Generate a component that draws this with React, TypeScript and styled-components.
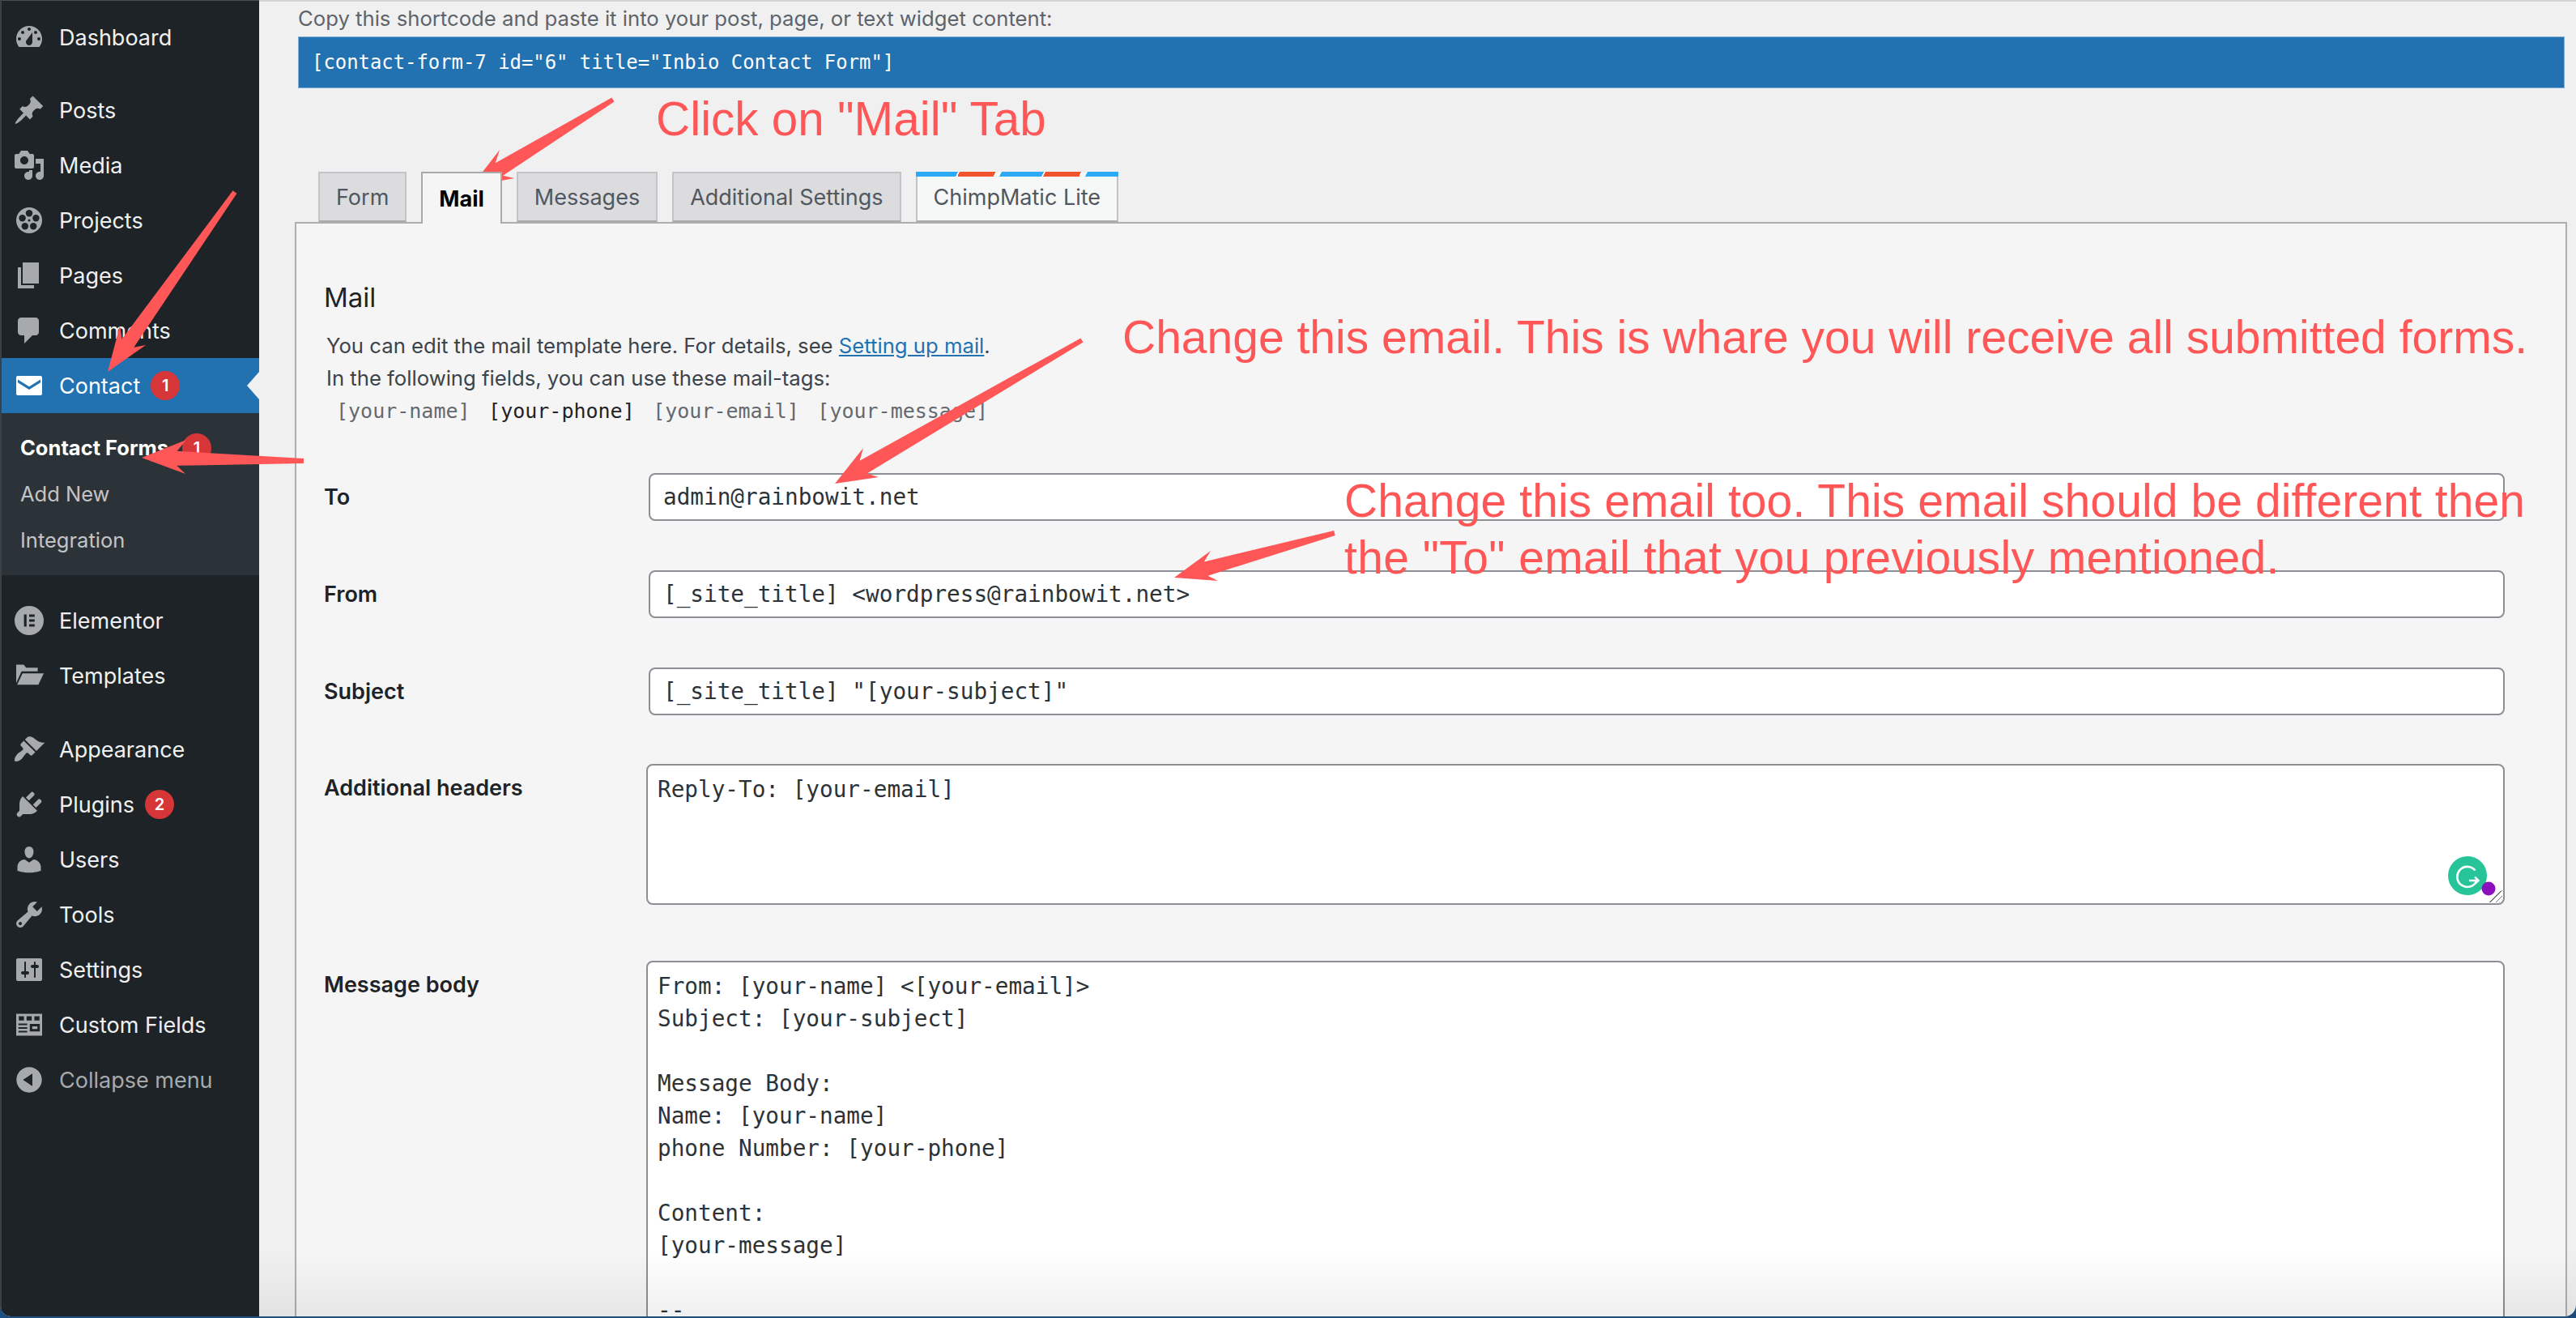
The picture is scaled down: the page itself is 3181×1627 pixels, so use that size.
import React from 'react';
import styled, { createGlobalStyle } from 'styled-components';

const UI_FONT = '"Inter", "Liberation Sans", sans-serif';
const MONO_FONT = '"DejaVu Sans Mono", "Liberation Mono", monospace';
const NOTE_COLOR = '#ff5757';

const GlobalStyle = createGlobalStyle`
    html, body {
        margin: 0;
        padding: 0;
        background: #1b4f82;
    }
    * {
        box-sizing: border-box;
    }
`;

// Page frame
const Desktop = styled.div`
    position: relative;
    width: 3181px;
    height: 1627px;
    overflow: hidden;
    background: #1b4f82;
    font-family: ${UI_FONT};
`;

const Frame = styled.div`
    display: flex;
    height: 1625px;
    overflow: hidden;
    border-radius: 0 0 14px 14px;
    background: #f0f0f1;
`;

// Sidebar
const Sidebar = styled.nav`
    flex: 0 0 320px;
    padding-top: 11px;
    background: #1d2327;
    border-left: 2px solid #3b4045;
    border-top: 1px solid #4a4e52;
`;

const MenuGroup = styled.div`
    margin-bottom: 22px;

    &:last-child {
        margin-top: 23px;
    }
`;

const MenuItem = styled.div<{ $current?: boolean; $muted?: boolean }>`
    position: relative;
    display: flex;
    align-items: center;
    gap: 17px;
    height: 68px;
    padding-left: 14px;
    font-size: 27px;
    color: ${(p) => (p.$current ? '#fff' : p.$muted ? '#a7aaad' : '#f0f0f1')};
    background: ${(p) => (p.$current ? '#2271b1' : 'transparent')};

    ${(p) =>
        p.$current &&
        `&::after {
            content: '';
            position: absolute;
            right: 0;
            top: 50%;
            margin-top: -17px;
            border: 17px solid transparent;
            border-left-width: 0;
            border-right: 15px solid #f0f0f1;
        }`}
`;

const Glyph = styled.svg<{ $current?: boolean }>`
    flex: 0 0 40px;
    width: 40px;
    height: 40px;
    fill: ${(p) => (p.$current ? '#fff' : '#a7aaad')};
`;

const Badge = styled.span<{ $gap?: number }>`
    display: inline-flex;
    align-items: center;
    justify-content: center;
    width: 36px;
    height: 36px;
    margin-left: ${(p) => p.$gap ?? -4}px;
    border-radius: 50%;
    background: #d63638;
    color: #fff;
    font-size: 20px;
    font-weight: 600;
`;

const SubMenu = styled.div`
    padding: 14px 0 15px;
    background: #2c3338;
`;

const SubItem = styled.div<{ $current?: boolean }>`
    display: flex;
    align-items: center;
    height: 57px;
    padding-left: 23px;
    font-size: 25.5px;
    font-weight: ${(p) => (p.$current ? 700 : 400)};
    color: ${(p) => (p.$current ? '#fff' : '#c3c4c7')};
`;

// Main column
const Main = styled.main`
    flex: 1;
    min-width: 0;
    padding: 0 14px 0 48px;
    border-top: 2px solid #d4d4d4;
    color: #3c434a;
`;

const ShortcodeHint = styled.p`
    margin: 0;
    height: 43px;
    line-height: 42px;
    font-size: 25.7px;
    color: #5f646a;
`;

const ShortcodeBar = styled.div`
    display: flex;
    align-items: center;
    height: 64px;
    padding-left: 16px;
    background: #2271b1;
    border: 1px solid #7fafd6;
    color: #fff;
    font-family: ${MONO_FONT};
    font-size: 23.9px;
`;

const TabRow = styled.div`
    display: flex;
    gap: 18px;
    height: 165px;
    margin: 0 -3px 0 25px;
    padding-top: 103px;
`;

const Tab = styled.div<{ $active?: boolean; $airmail?: boolean }>`
    position: relative;
    display: flex;
    align-items: center;
    justify-content: center;
    height: ${(p) => (p.$active ? 64 : 62)}px;
    padding: 0 20px;
    border: 2px solid ${(p) => (p.$active ? '#a9a9a9' : '#c3c4c7')};
    border-bottom: ${(p) => (p.$active ? 'none' : '2px solid #aaa')};
    background: ${(p) => (p.$active ? '#f5f5f5' : p.$airmail ? '#f6f7f7' : '#dcdcde')};
    color: ${(p) => (p.$active ? '#000' : '#50575e')};
    font-size: 27px;
    font-weight: ${(p) => (p.$active ? 700 : 400)};
    z-index: ${(p) => (p.$active ? 2 : 0)};

    ${(p) =>
        p.$airmail &&
        `&::before {
            content: '';
            position: absolute;
            top: -2px;
            left: -2px;
            right: -2px;
            height: 6px;
            background: repeating-linear-gradient(115deg, #2ea9f5 0 47px, #f6f7f7 47px 49px, #f0532e 49px 89px, #f6f7f7 89px 96px);
        }`}
`;

const Panel = styled.section`
    position: relative;
    height: 1400px;
    margin: 0 -3px 0 -4px;
    padding: 66px 75px 0 34px;
    background: #f5f5f5;
    border: 2px solid #aeaeae;
`;

const PanelTitle = styled.h2`
    margin: 0 0 15px;
    height: 50px;
    line-height: 50px;
    font-size: 33px;
    font-weight: 400;
    color: #1d2327;
`;

const Description = styled.p`
    margin: 0;
    height: 40px;
    line-height: 40px;
    padding-left: 3px;
    font-size: 25.7px;
    color: #3c434a;
`;

const HelpLink = styled.a`
    color: #2271b1;
    text-decoration: underline;
`;

const TagList = styled.div`
    display: flex;
    gap: 22.5px;
    margin-bottom: 57px;
    padding-left: 15px;
    height: 40px;
    align-items: center;
    font-family: ${MONO_FONT};
    font-size: 25px;
`;

const MailTag = styled.span<{ $used?: boolean }>`
    color: ${(p) => (p.$used ? '#1d2327' : '#646970')};
`;

const FieldRow = styled.div<{ $gap: number; $top?: boolean }>`
    display: grid;
    grid-template-columns: 398px 1fr;
    align-items: ${(p) => (p.$top ? 'start' : 'center')};
    margin-bottom: ${(p) => p.$gap}px;
`;

const FieldLabel = styled.label<{ $top?: boolean }>`
    padding-top: ${(p) => (p.$top ? 10 : 0)}px;
    line-height: 40px;
    font-size: 27px;
    font-weight: 600;
    color: #1d2327;
`;

const TextField = styled.div`
    height: 59px;
    margin-left: 3px;
    padding: 0 16px;
    line-height: 55px;
    background: #fff;
    border: 2px solid #8c8f94;
    border-radius: 8px;
    font-family: ${MONO_FONT};
    font-size: 27.7px;
    color: #2c3338;
`;

const TextArea = styled.div<{ $height: number }>`
    position: relative;
    height: ${(p) => p.$height}px;
    padding: 10px 12px;
    line-height: 40px;
    white-space: pre-line;
    background: #fff;
    border: 2px solid #8c8f94;
    border-radius: 8px;
    font-family: ${MONO_FONT};
    font-size: 27.7px;
    color: #2c3338;
`;

const ResizeGrip = styled.span`
    position: absolute;
    right: 1px;
    bottom: 1px;
    width: 16px;
    height: 16px;
    background: linear-gradient(135deg, transparent 50%, #777 50%, #777 56%, transparent 56%, transparent 72%, #777 72%, #777 78%, transparent 78%);
`;

const GrammarlyMark = styled.svg`
    position: absolute;
    right: 2px;
    bottom: -8px;
    width: 66px;
    height: 66px;
`;

// Annotations drawn over the screenshot
const ArrowLayer = styled.svg`
    position: absolute;
    inset: 0;
    width: 3181px;
    height: 1627px;
    pointer-events: none;
`;

const Note = styled.div<{ $x: number; $y: number; $size?: number; $spacing?: number }>`
    position: absolute;
    left: ${(p) => p.$x}px;
    top: ${(p) => p.$y}px;
    line-height: 70px;
    white-space: pre;
    font-family: "Liberation Sans", Arial, sans-serif;
    font-size: ${(p) => p.$size ?? 57}px;
    letter-spacing: ${(p) => p.$spacing ?? 0}px;
    color: ${NOTE_COLOR};
`;

const BottomFade = styled.div`
    position: absolute;
    left: 320px;
    right: 0;
    bottom: 2px;
    height: 80px;
    background: linear-gradient(to bottom, rgba(0, 0, 0, 0), rgba(0, 0, 0, 0.06));
    pointer-events: none;
`;

type Point = [number, number];

// tapered arrow: narrow at the tail, swept-back head at the tip
const arrowPoints = (tail: Point, tip: Point, wingA: Point, wingB: Point) => {
    const dx = tail[0] - tip[0];
    const dy = tail[1] - tip[1];
    const len = Math.hypot(dx, dy);
    const ux = dx / len;
    const uy = dy / len;
    const nx = -uy;
    const ny = ux;
    const headLen = (wingA[0] - tip[0]) * ux + (wingA[1] - tip[1]) * uy;
    const neck = headLen * 0.8;
    const side = (wing: Point) => ((wing[0] - tip[0]) * nx + (wing[1] - tip[1]) * ny > 0 ? 1 : -1);
    const sa = side(wingA);
    const sb = side(wingB);
    const at = (along: number, across: number, base: Point = tip): string =>
        `${base[0] + ux * along + nx * across},${base[1] + uy * along + ny * across}`;
    return [
        at(0, sa * 3, tail),
        at(neck, sa * 9),
        wingA.join(','),
        tip.join(','),
        wingB.join(','),
        at(neck, sb * 9),
        at(0, sb * 3, tail),
    ].join(' ');
};

const ARROWS: [Point, Point, Point, Point][] = [
    [[290, 237], [133, 459], [180, 426], [148, 402]],
    [[757, 123], [582, 230], [635, 220], [617, 185]],
    [[375, 569], [175, 565], [229, 585], [230, 543]],
    [[1336, 420], [1031, 597], [1085, 589], [1066, 553]],
    [[1648, 658], [1450, 713], [1504, 717], [1495, 680]],
];

// Sidebar icons
const Icon = ({ current, children }: { current?: boolean; children: React.ReactNode }) => (
    <Glyph viewBox="0 0 20 20" $current={current}>
        {children}
    </Glyph>
);

const P = ({ d }: { d: string }) => <path fillRule="evenodd" d={d} />;

const ICONS: Record<string, React.ReactNode> = {
    dashboard: <P d="M3.76 16h12.48c1.1-1.37 1.76-3.11 1.76-5 0-4.42-3.58-8-8-8s-8 3.58-8 8c0 1.89.66 3.63 1.76 5zM10 4c.55 0 1 .45 1 1s-.45 1-1 1-1-.45-1-1 .45-1 1-1zM6 6c.55 0 1 .45 1 1s-.45 1-1 1-1-.45-1-1 .45-1 1-1zm8 0c.55 0 1 .45 1 1s-.45 1-1 1-1-.45-1-1 .45-1 1-1zm-5.37 5.55L12 7v6c0 1.1-.9 2-2 2s-2-.9-2-2c0-.57.24-1.08.63-1.45zM4 10c.55 0 1 .45 1 1s-.45 1-1 1-1-.45-1-1 .45-1 1-1zm12 0c.55 0 1 .45 1 1s-.45 1-1 1-1-.45-1-1 .45-1 1-1z" />,
    posts: <P d="M10.44 3.02l1.82-1.82 6.36 6.35-1.83 1.82c-1.05-.68-2.48-.57-3.41.36l-.75.75c-.92.93-1.04 2.35-.35 3.41l-1.83 1.82-2.41-2.41-2.8 2.79c-.42.42-3.38 2.71-3.8 2.29s1.86-3.39 2.28-3.81l2.79-2.79L4.1 9.36l1.83-1.82c1.05.69 2.48.57 3.4-.36l.75-.75c.93-.92 1.05-2.35.36-3.41z" />,
    media: <P d="M13 11V4c0-.55-.45-1-1-1h-1.67L9 1H5L3.67 3H2c-.55 0-1 .45-1 1v7c0 .55.45 1 1 1h10c.55 0 1-.45 1-1zM7 4.5c1.38 0 2.5 1.12 2.5 2.5S8.38 9.5 7 9.5 4.5 8.38 4.5 7 5.62 4.5 7 4.5zM14 6h5v10.5c0 1.38-1.12 2.5-2.5 2.5S14 17.88 14 16.5s1.12-2.5 2.5-2.5c.17 0 .34.02.5.05V9h-3V6zm-4 8.05V13h2v3.5c0 1.38-1.12 2.5-2.5 2.5S7 17.88 7 16.5 8.12 14 9.5 14c.17 0 .34.02.5.05z" />,
    projects: (
        <>
            <circle cx="10" cy="10" r="8" />
            <circle cx="10" cy="5.6" r="2.1" fill="#1d2327" />
            <circle cx="5.8" cy="8.6" r="2.1" fill="#1d2327" />
            <circle cx="14.2" cy="8.6" r="2.1" fill="#1d2327" />
            <circle cx="7.4" cy="13.6" r="2.1" fill="#1d2327" />
            <circle cx="12.6" cy="13.6" r="2.1" fill="#1d2327" />
            <circle cx="10" cy="10" r=".8" fill="#1d2327" />
        </>
    ),
    pages: <P d="M6 15V2h10v13H6zm-1 1h8v2H3V5h2v11z" />,
    comments: <P d="M5 2h9c1.1 0 2 .9 2 2v7c0 1.1-.9 2-2 2h-2l-5 5v-5H5c-1.1 0-2-.9-2-2V4c0-1.1.9-2 2-2z" />,
    contact: <P d="M3 4h14c.55 0 1 .45 1 1v10c0 .55-.45 1-1 1H3c-.55 0-1-.45-1-1V5c0-.55.45-1 1-1zm14 2.2L10 10.6 3 6.2v1.9l7 4.4 7-4.4V6.2z" />,
    elementor: (
        <P d="M10 1a9 9 0 1 1 0 18 9 9 0 0 1 0-18zM6.8 6.2v7.6h1.6V6.2H6.8zm3.2 0v1.5h3.4V6.2H10zm0 3.05v1.5h3.4v-1.5H10zm0 3.05v1.5h3.4v-1.5H10z" />
    ),
    templates: <P d="M2 3.2h4.6l1.6 1.9h7.1v2.3H5.3L2 14.6V3.2zM5.9 8.6H19l-3.3 7H2.6l3.3-7z" />,
    appearance: <P d="M14.48 11.06L7.41 3.99l1.5-1.5c.5-.56 2.3-.47 3.51.32 1.21.8 1.43 1.28 2.91 2.1 1.18.64 2.45 1.26 4.45.85zm-.71.71L6.7 4.7 4.93 6.47c-.39.39-.39 1.02 0 1.41l1.06 1.06c.39.39.39 1.03 0 1.42-.6.6-1.43 1.11-2.21 1.69-.35.26-.7.53-1.01.84-1.43 1.43-2.2 3.8-1.6 4.4s2.97-.17 4.4-1.6c.31-.31.58-.66.84-1.01.58-.78 1.09-1.61 1.69-2.21.39-.39 1.03-.39 1.42 0l1.06 1.06c.39.39 1.02.39 1.41 0z" />,
    plugins: <P d="M13.11 4.36L9.87 7.6 8 5.73l3.24-3.24c.35-.34 1.05-.2 1.56.32.52.51.66 1.21.31 1.55zm-8 1.77l.91-1.12 9.01 9.01-1.19.84c-.71.71-2.63 1.16-3.82 1.16H6.14L4.9 17.26c-.59.59-1.54.59-2.12 0-.59-.58-.59-1.53 0-2.12l1.24-1.24v-3.88c0-1.13.4-3.19 1.09-3.89zm7.26 3.97l3.24-3.24c.34-.35 1.04-.21 1.55.31.52.51.66 1.21.31 1.55l-3.24 3.25z" />,
    users: <P d="M10 9.25c-2.27 0-2.73-3.44-2.73-3.44C7 4.02 7.82 2 9.97 2c2.16 0 2.98 2.02 2.71 3.81 0 0-.41 3.44-2.68 3.44zm0 2.57L12.72 10c2.39 0 4.52 2.33 4.52 4.53v2.49s-3.65 1.13-7.24 1.13c-3.65 0-7.24-1.13-7.24-1.13v-2.49c0-2.25 1.94-4.48 4.47-4.48z" />,
    tools: <P d="M16.68 9.77c-1.34 1.34-3.3 1.67-4.95.99l-5.41 6.52c-.99.99-2.59.99-3.58 0s-.99-2.59 0-3.57l6.52-5.42c-.68-1.65-.35-3.61.99-4.95 1.28-1.28 3.12-1.62 4.72-1.06l-2.89 2.89 2.82 2.82 2.86-2.87c.53 1.58.18 3.39-1.08 4.65zM3.81 16.21c.4.39 1.04.39 1.43 0 .4-.4.4-1.04 0-1.43-.39-.4-1.03-.4-1.43 0-.39.39-.39 1.03 0 1.43z" />,
    settings: <P d="M18 16V4c0-.55-.45-1-1-1H3c-.55 0-1 .45-1 1v12c0 .55.45 1 1 1h14c.55 0 1-.45 1-1zM8 11h1c.55 0 1 .45 1 1s-.45 1-1 1H8v1.5c0 .28-.22.5-.5.5s-.5-.22-.5-.5V13H6c-.55 0-1-.45-1-1s.45-1 1-1h1V5.5c0-.28.22-.5.5-.5s.5.22.5.5V11zm5-2h-1c-.55 0-1-.45-1-1s.45-1 1-1h1V5.5c0-.28.22-.5.5-.5s.5.22.5.5V7h1c.55 0 1 .45 1 1s-.45 1-1 1h-1v5.5c0 .28-.22.5-.5.5s-.5-.22-.5-.5V9z" />,
    fields: (
        <P d="M2 3.2h16v13.6H2V3.2zM3.6 4.8v2.6h3.2V4.8H3.6zm4.8 0v2.6h3.2V4.8H8.4zm4.8 0v2.6h3.2V4.8h-3.2zM3.4 9.3v1h5.4v-1H3.4zm0 2.2v1h5.4v-1H3.4zm0 2.2v1h5.4v-1H3.4zm7-4.2v4.6h6.2V9.5h-6.2zm1.5 1.5h3.2v1.6h-3.2V11z" />
    ),
    collapse: <P d="M10 2.16c4.33 0 7.84 3.51 7.84 7.84s-3.51 7.84-7.84 7.84S2.16 14.33 2.16 10 5.71 2.16 10 2.16zm2 11.72V6.12L6.18 9.97z" />,
};

const MESSAGE_BODY = `From: [your-name] <[your-email]>
Subject: [your-subject]

Message Body:
Name: [your-name]
phone Number: [your-phone]

Content:
[your-message]

--`;

const NavItem = ({ icon, label, badge, current, muted }: { icon: string; label: string; badge?: string; current?: boolean; muted?: boolean }) => (
    <MenuItem $current={current} $muted={muted}>
        <Icon current={current}>{ICONS[icon]}</Icon>
        <span>{label}</span>
        {badge && <Badge>{badge}</Badge>}
    </MenuItem>
);

const App = () => (
    <Desktop>
        <GlobalStyle />
        <Frame>
            <Sidebar>
                <MenuGroup>
                    <NavItem icon="dashboard" label="Dashboard" />
                </MenuGroup>
                <MenuGroup>
                    <NavItem icon="posts" label="Posts" />
                    <NavItem icon="media" label="Media" />
                    <NavItem icon="projects" label="Projects" />
                    <NavItem icon="pages" label="Pages" />
                    <NavItem icon="comments" label="Comments" />
                    <NavItem icon="contact" label="Contact" badge="1" current />
                    <SubMenu>
                        <SubItem $current>
                            Contact Forms
                            <Badge $gap={17}>1</Badge>
                        </SubItem>
                        <SubItem>Add New</SubItem>
                        <SubItem>Integration</SubItem>
                    </SubMenu>
                </MenuGroup>
                <MenuGroup>
                    <NavItem icon="elementor" label="Elementor" />
                    <NavItem icon="templates" label="Templates" />
                </MenuGroup>
                <MenuGroup>
                    <NavItem icon="appearance" label="Appearance" />
                    <NavItem icon="plugins" label="Plugins" badge="2" />
                    <NavItem icon="users" label="Users" />
                    <NavItem icon="tools" label="Tools" />
                    <NavItem icon="settings" label="Settings" />
                    <NavItem icon="fields" label="Custom Fields" />
                    <NavItem icon="collapse" label="Collapse menu" muted />
                </MenuGroup>
            </Sidebar>
            <Main>
                <ShortcodeHint>Copy this shortcode and paste it into your post, page, or text widget content:</ShortcodeHint>
                <ShortcodeBar>[contact-form-7 id="6" title="Inbio Contact Form"]</ShortcodeBar>
                <TabRow>
                    <Tab>Form</Tab>
                    <Tab $active>Mail</Tab>
                    <Tab>Messages</Tab>
                    <Tab>Additional Settings</Tab>
                    <Tab $airmail>ChimpMatic Lite</Tab>
                </TabRow>
                <Panel>
                    <PanelTitle>Mail</PanelTitle>
                    <Description>
                        You can edit the mail template here. For details, see <HelpLink>Setting up mail</HelpLink>.
                    </Description>
                    <Description>In the following fields, you can use these mail-tags:</Description>
                    <TagList>
                        <MailTag>[your-name]</MailTag>
                        <MailTag $used>[your-phone]</MailTag>
                        <MailTag>[your-email]</MailTag>
                        <MailTag>[your-message]</MailTag>
                    </TagList>
                    <FieldRow $gap={61}>
                        <FieldLabel>To</FieldLabel>
                        <TextField>admin@rainbowit.net</TextField>
                    </FieldRow>
                    <FieldRow $gap={61}>
                        <FieldLabel>From</FieldLabel>
                        <TextField>{'[_site_title] <wordpress@rainbowit.net>'}</TextField>
                    </FieldRow>
                    <FieldRow $gap={60}>
                        <FieldLabel>Subject</FieldLabel>
                        <TextField>[_site_title] "[your-subject]"</TextField>
                    </FieldRow>
                    <FieldRow $gap={69} $top>
                        <FieldLabel $top>Additional headers</FieldLabel>
                        <TextArea $height={174}>
                            Reply-To: [your-email]
                            <GrammarlyMark viewBox="0 0 66 66">
                                <circle cx="24" cy="24" r="24" fill="#27c499" />
                                <path d="M33.5 17.5A12.5 12.5 0 1 0 35 31" fill="none" stroke="#fff" strokeWidth="2.6" />
                                <path d="M26 30h11v-1M33 25.5l4.5 4.5-4.5 4" fill="none" stroke="#fff" strokeWidth="2.4" />
                                <circle cx="50" cy="40" r="8.5" fill="#8b0fbd" />
                            </GrammarlyMark>
                            <ResizeGrip />
                        </TextArea>
                    </FieldRow>
                    <FieldRow $gap={0} $top>
                        <FieldLabel $top>Message body</FieldLabel>
                        <TextArea $height={700}>{MESSAGE_BODY}</TextArea>
                    </FieldRow>
                </Panel>
            </Main>
        </Frame>
        <BottomFade />
        <Note $x={810} $y={112} $size={58.4}>Click on "Mail" Tab</Note>
        <Note $x={1386} $y={381}>Change this email. This is whare you will receive all submitted forms.</Note>
        <Note $x={1660} $y={583} $spacing={0.1}>Change this email too. This email should be different then</Note>
        <Note $x={1660} $y={653} $spacing={0.4}>the "To" email that you previously mentioned.</Note>
        <ArrowLayer viewBox="0 0 3181 1627">
            {ARROWS.map(([tail, tip, a, b]) => (
                <polygon key={tip.join()} points={arrowPoints(tail, tip, a, b)} fill={NOTE_COLOR} />
            ))}
        </ArrowLayer>
    </Desktop>
);

export default App;
